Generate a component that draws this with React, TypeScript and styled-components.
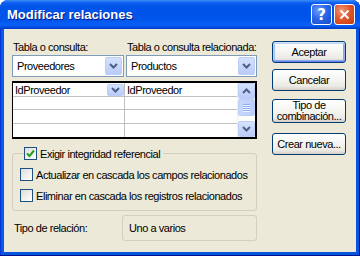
import React from "react";
import styled, { createGlobalStyle } from "styled-components";

const GlobalStyle = createGlobalStyle`
  html, body {
    margin: 0;
    padding: 0;
    background: #ffffff;
  }
  body {
    font-family: "Liberation Sans", Arial, sans-serif;
    font-size: 11px;
    letter-spacing: -0.45px;
    color: #000;
  }
`;

const Window = styled.div`
  width: 360px;
  height: 256px;
  box-sizing: border-box;
  display: flex;
  flex-direction: column;
  padding: 0 4px 4px;
  border-radius: 8px 8px 0 0;
  overflow: hidden;
  background: linear-gradient(90deg, #0019cf 0px, #0855dd 1px, #0b5bec 3px, #0855dd 4px);
  box-shadow: inset 0 -1px 0 #001490, inset -1px 0 0 #001490;
`;

const TitleBar = styled.div`
  height: 29px;
  margin: 0 -4px;
  padding: 0 5px 0 7px;
  display: flex;
  align-items: center;
  background: linear-gradient(
    #3c8ff8 0px,
    #0a5cf0 3px,
    #0053e8 8px,
    #0055eb 20px,
    #0b60f8 25px,
    #0046d6 28px,
    #0037c0 29px
  );
`;

const Title = styled.span`
  flex: 1;
  font-family: "Liberation Sans", Arial, sans-serif;
  font-weight: 700;
  font-size: 13px;
  letter-spacing: 0;
  color: #fff;
  text-shadow: 1px 1px 0 #0a1883;
  padding-bottom: 1px;
`;

const CaptionButton = styled.div<{ $kind: "help" | "close" }>`
  width: 21px;
  height: 21px;
  box-sizing: border-box;
  margin-left: 2px;
  border: 1px solid #fff;
  border-radius: 3px;
  display: flex;
  align-items: center;
  justify-content: center;
  color: #fff;
  font-family: "DejaVu Sans", sans-serif;
  font-weight: 700;
  font-size: 15px;
  letter-spacing: 0;
  background: ${(p) =>
    p.$kind === "close"
      ? "radial-gradient(circle at 35% 30%, #f09a78 0%, #e2572c 45%, #c33a10 100%)"
      : "radial-gradient(circle at 35% 30%, #6f9df8 0%, #2a67e8 45%, #1748c8 100%)"};
`;

const Body = styled.div`
  flex: 1;
  background: #ece9d8;
  display: flex;
  padding: 12px 10px 0 8px;
  gap: 15px;
`;

const Main = styled.div`
  width: 245px;
  display: flex;
  flex-direction: column;
`;

const LabelRow = styled.div`
  display: grid;
  grid-template-columns: 114px 1fr;
  height: 13px;
  line-height: 13px;
  margin-bottom: 1px;
`;

const Label = styled.span<{ $indent?: number }>`
  padding-left: ${(p) => p.$indent ?? 0}px;
  white-space: nowrap;
`;

const ComboRow = styled.div`
  display: grid;
  grid-template-columns: 112px 1fr;
  gap: 2px;
`;

const Combo = styled.div`
  height: 22px;
  box-sizing: border-box;
  border: 1px solid #7f9db9;
  background: #fff;
  display: flex;
  align-items: center;
  padding: 1px;
`;

const ComboText = styled.span`
  flex: 1;
  padding-left: 3px;
  white-space: nowrap;
`;

const ArrowButton = styled.div<{ $h?: number }>`
  width: 17px;
  height: ${(p) => p.$h ?? 18}px;
  box-sizing: border-box;
  border: 1px solid #bccdf7;
  border-radius: 2px;
  background: linear-gradient(#d5e1fd, #b8cbf8);
  display: flex;
  align-items: center;
  justify-content: center;
`;

const Grid = styled.div`
  margin-top: 4px;
  border: 2px solid #000;
  border-left-width: 1px;
  background: #fff;
  display: flex;
`;

const Cells = styled.div`
  flex: 1;
  display: grid;
  grid-template-columns: 111px 1fr;
  grid-template-rows: 14px 13px 14px 13px;
`;

const Cell = styled.div<{ $last?: boolean; $first?: boolean }>`
  box-sizing: border-box;
  border-bottom: ${(p) => (p.$last ? "none" : "1px solid #c0c0c0")};
  border-left: ${(p) => (p.$first ? "none" : "1px solid #c0c0c0")};
  display: flex;
  align-items: center;
  padding-left: 2px;
  line-height: 12px;
  white-space: nowrap;
`;

const CellText = styled.span`
  flex: 1;
`;

const ScrollBar = styled.div`
  width: 17px;
  display: flex;
  flex-direction: column;
  background: #fdfdfa;
  border-left: 1px solid #f0f0ea;
`;

const Thumb = styled.div`
  height: 17px;
  box-sizing: border-box;
  border: 1px solid #bccdf7;
  border-radius: 2px;
  background: linear-gradient(90deg, #c8d7fc, #bccff9);
  display: flex;
  flex-direction: column;
  align-items: center;
  justify-content: center;
  gap: 1px;
`;

const Grip = styled.div`
  width: 7px;
  height: 1px;
  background: #8eaef3;
  box-shadow: 0 1px 0 #eef3ff;
`;

const Track = styled.div`
  flex: 1;
`;

const Group = styled.fieldset`
  margin: 8px 0 0;
  padding: 8px 0 8px 7px;
  border: 1px solid #d0d0bf;
  border-radius: 3px;
  box-sizing: border-box;
  display: flex;
  flex-direction: column;
  gap: 8px;
`;

const Legend = styled.legend`
  padding: 0 3px 0 0;
  margin-left: 4px;
  display: flex;
  align-items: center;
  gap: 3px;
`;

const CheckRow = styled.label`
  display: flex;
  align-items: center;
  gap: 3px;
  height: 13px;
  white-space: nowrap;
`;

const CheckBox = styled.span`
  width: 13px;
  height: 13px;
  box-sizing: border-box;
  border: 1px solid #1c5180;
  background: linear-gradient(135deg, #dcdcd7 0%, #f2f2ef 60%, #ffffff 100%);
  display: flex;
  align-items: center;
  justify-content: center;
`;

const TypeRow = styled.div`
  margin-top: 4px;
  display: flex;
  align-items: center;
`;

const TypeLabel = styled.span`
  width: 108px;
  padding-left: 2px;
  white-space: nowrap;
`;

const TypeBox = styled.div`
  flex: 1;
  height: 26px;
  box-sizing: border-box;
  border: 1px solid #d0d0bf;
  border-radius: 3px;
  display: flex;
  align-items: center;
  padding-left: 6px;
`;

const Buttons = styled.div`
  width: 74px;
  display: flex;
  flex-direction: column;
`;

const Button = styled.button<{ $default?: boolean; $gap?: number; $h?: number }>`
  margin: ${(p) => p.$gap ?? 0}px 0 0;
  width: 74px;
  height: ${(p) => p.$h ?? 22}px;
  padding: 0;
  box-sizing: border-box;
  border: 1px solid #003c74;
  border-radius: 3px;
  font-family: "Liberation Sans", Arial, sans-serif;
  font-size: 11px;
  letter-spacing: -0.45px;
  line-height: 11px;
  color: #000;
  background: linear-gradient(#ffffff 0%, #f4f4f0 50%, #ecebe6 80%, #d6d0c5 100%);
  box-shadow: ${(p) =>
    p.$default
      ? "inset 0 1px 0 #cee7ff, inset 0 -1px 0 #6982ee, inset 1px 0 0 #b7d0fb, inset -1px 0 0 #97aef5, inset 0 2px 0 #bcd4f6, inset 0 -2px 0 #89adf4, inset 2px 0 0 #a6c2f7, inset -2px 0 0 #8aa6f2"
      : "none"};
`;

const Chevron = ({ up }: { up?: boolean }) => (
  <svg width="9" height="6" viewBox="0 0 9 6">
    <path
      d={up ? "M1 5 L4.5 1.5 L8 5" : "M1 1 L4.5 4.5 L8 1"}
      fill="none"
      stroke="#4d6185"
      strokeWidth="2"
    />
  </svg>
);

const Check = () => (
  <svg width="9" height="9" viewBox="0 0 9 9">
    <path d="M1 4.5 L3.5 7 L8 1.5" fill="none" stroke="#21a121" strokeWidth="2" />
  </svg>
);

const CloseGlyph = () => (
  <svg width="11" height="11" viewBox="0 0 11 11">
    <path d="M1.5 1.5 L9.5 9.5 M9.5 1.5 L1.5 9.5" stroke="#fff" strokeWidth="2" />
  </svg>
);

const rows = [
  ["IdProveedor", "IdProveedor"],
  ["", ""],
  ["", ""],
  ["", ""],
];

const options = [
  { text: "Actualizar en cascada los campos relacionados", checked: false },
  { text: "Eliminar en cascada los registros relacionados", checked: false },
];

export default function App() {
  return (
    <>
      <GlobalStyle />
      <Window>
        <TitleBar>
          <Title>Modificar relaciones</Title>
          <CaptionButton $kind="help">?</CaptionButton>
          <CaptionButton $kind="close">
            <CloseGlyph />
          </CaptionButton>
        </TitleBar>
        <Body>
          <Main>
            <LabelRow>
              <Label $indent={1}>Tabla o consulta:</Label>
              <Label $indent={1}>Tabla o consulta relacionada:</Label>
            </LabelRow>
            <ComboRow>
              <Combo>
                <ComboText>Proveedores</ComboText>
                <ArrowButton>
                  <Chevron />
                </ArrowButton>
              </Combo>
              <Combo>
                <ComboText>Productos</ComboText>
                <ArrowButton>
                  <Chevron />
                </ArrowButton>
              </Combo>
            </ComboRow>
            <Grid>
              <Cells>
                {rows.map((r, i) => (
                  <React.Fragment key={i}>
                    <Cell $first $last={i === rows.length - 1}>
                      <CellText>{r[0]}</CellText>
                      {i === 0 && (
                        <ArrowButton $h={12}>
                          <Chevron />
                        </ArrowButton>
                      )}
                    </Cell>
                    <Cell $last={i === rows.length - 1}>
                      <CellText>{r[1]}</CellText>
                    </Cell>
                  </React.Fragment>
                ))}
              </Cells>
              <ScrollBar>
                <ArrowButton $h={16}>
                  <Chevron up />
                </ArrowButton>
                <Thumb>
                  <Grip />
                  <Grip />
                  <Grip />
                  <Grip />
                </Thumb>
                <Track />
                <ArrowButton $h={16}>
                  <Chevron />
                </ArrowButton>
              </ScrollBar>
            </Grid>
            <Group>
              <Legend>
                <CheckBox>
                  <Check />
                </CheckBox>
                Exigir integridad referencial
              </Legend>
              {options.map((o) => (
                <CheckRow key={o.text}>
                  <CheckBox>{o.checked && <Check />}</CheckBox>
                  {o.text}
                </CheckRow>
              ))}
            </Group>
            <TypeRow>
              <TypeLabel>Tipo de relación:</TypeLabel>
              <TypeBox>Uno a varios</TypeBox>
            </TypeRow>
          </Main>
          <Buttons>
            <Button $default>Aceptar</Button>
            <Button $gap={6}>Cancelar</Button>
            <Button $gap={8} $h={24}>
              Tipo de
              <br />
              combinación...
            </Button>
            <Button $gap={10}>Crear nueva...</Button>
          </Buttons>
        </Body>
      </Window>
    </>
  );
}
